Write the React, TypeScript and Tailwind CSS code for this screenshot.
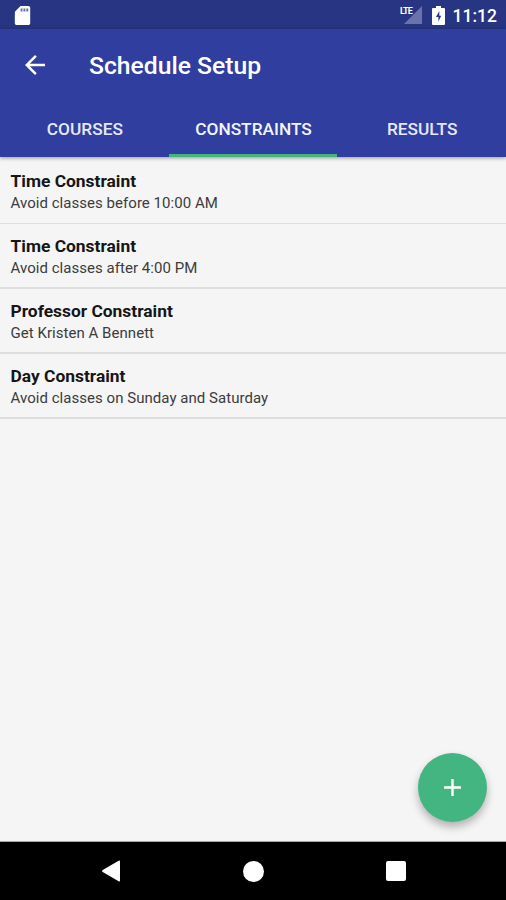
const TABS = ["COURSES", "CONSTRAINTS", "RESULTS"];

const CONSTRAINTS = [
  { title: "Time Constraint", detail: "Avoid classes before 10:00 AM" },
  { title: "Time Constraint", detail: "Avoid classes after 4:00 PM" },
  { title: "Professor Constraint", detail: "Get Kristen A Bennett" },
  { title: "Day Constraint", detail: "Avoid classes on Sunday and Saturday" },
];

function StatusBar() {
  return (
    <div className="flex h-[29px] shrink-0 items-center bg-[#283583] pr-[9px] pl-[11px] text-white">
      <svg viewBox="0 0 24 24" className="mt-[2px] size-[23px]" fill="currentColor">
        <path d="M18 2h-8L4.02 8 4 20c0 1.1.9 2 2 2h12c1.1 0 2-.9 2-2V4c0-1.1-.9-2-2-2z" />
        <path d="M10 4.7h2v3h-2zM13 4.7h2v3h-2zM16 4.7h2v3h-2z" fill="#283583" opacity=".7" />
      </svg>
      <div className="relative ml-auto h-[19px] w-[22px]">
        <svg viewBox="0 0 22 19" className="h-[19px] w-[22px]">
          <path d="M22 1v18H4z" fill="#6873ac" />
        </svg>
        <span className="absolute top-0 left-0 text-[9px] leading-[12px] font-bold tracking-[-0.8px]">LTE</span>
      </div>
      <svg viewBox="0 0 13 19" className="mt-px ml-[10px] h-[19px] w-[13px]">
        <path d="M4 0h5v2h3q1 0 1 1v15q0 1-1 1H1q-1 0-1-1V3q0-1 1-1h3z" fill="#fff" />
        <path d="M7.3 5L4 11h2.4v4.5L9.2 9.8H7.3z" fill="#283583" />
      </svg>
      <span className="mt-[4px] ml-[7px] w-[45px] text-right text-[17.5px] leading-none font-medium whitespace-nowrap">11:12</span>
    </div>
  );
}

function AppHeader() {
  return (
    <header className="relative z-10 h-[128px] shrink-0 bg-[#303f9f] text-white shadow-[0_1px_4px_rgba(0,0,0,0.4)]">
      <div className="flex h-[72px] items-center pl-5">
        <button type="button" aria-label="Back">
          <svg viewBox="0 0 24 24" className="size-[30px]" fill="currentColor">
            <path d="M20 11H7.83l5.59-5.59L12 4l-8 8 8 8 1.41-1.41L7.83 13H20v-2z" />
          </svg>
        </button>
        <h1 className="mt-[2px] ml-[39px] text-[24.7px] leading-none font-medium">Schedule Setup</h1>
      </div>
      <nav className="grid h-[56px] grid-cols-3">
        {TABS.map((tab) => (
          <button
            key={tab}
            type="button"
            className={
              tab === "CONSTRAINTS"
                ? "border-b-[3px] border-[#43b581] pt-[5px] pl-px text-[17.3px] font-medium text-[#f2f4ff]"
                : "border-b-[3px] border-transparent pt-[5px] pl-px text-[17.3px] font-medium text-[#e6e8f7]"
            }
          >
            {tab}
          </button>
        ))}
      </nav>
    </header>
  );
}

export default function App() {
  return (
    <div className="flex h-[900px] w-[506px] flex-col overflow-hidden bg-[#f5f5f5] font-[Roboto,sans-serif]">
      <StatusBar />
      <AppHeader />

      <main className="flex flex-1 flex-col border-b border-[#a8a8a8]">
        <ul>
          {CONSTRAINTS.map((c, idx) => (
            <li
              key={idx}
              className="h-[65px] border-b-2 border-[#dedede] pt-[12px] pl-[10.5px] first:h-[67px] first:border-b-[1.5px] first:pt-[14px]"
            >
              <p className="text-[17.4px] leading-[20px] font-bold text-[#161616]">{c.title}</p>
              <p className="mt-[3px] text-[15px] leading-[18px] tracking-[0.04px] text-[#3c3c3c]">{c.detail}</p>
            </li>
          ))}
        </ul>
        <button
          type="button"
          aria-label="Add constraint"
          className="mt-auto mr-[19px] mb-[19px] flex size-[69px] items-center justify-center self-end rounded-full bg-[#43b581] text-white shadow-[0_5px_9px_rgba(0,0,0,0.28)]"
        >
          <svg viewBox="0 0 24 24" className="size-[29px]" fill="currentColor">
            <path d="M19 13h-6v6h-2v-6H5v-2h6V5h2v6h6v2z" />
          </svg>
        </button>
      </main>

      <footer className="flex h-[58px] shrink-0 items-center justify-between bg-black pr-[100px] pl-[101px] text-white">
        <svg viewBox="0 0 20 22" className="h-[22px] w-5" fill="currentColor">
          <path d="M17.6.8Q19 0 19 1.6v18.8q0 1.6-1.4.8L1.7 12q-1.5-1 0-2z" />
        </svg>
        <div className="mr-px size-[21px] rounded-full bg-white" />
        <div className="size-[20px] rounded-[2px] bg-white" />
      </footer>
    </div>
  );
}
